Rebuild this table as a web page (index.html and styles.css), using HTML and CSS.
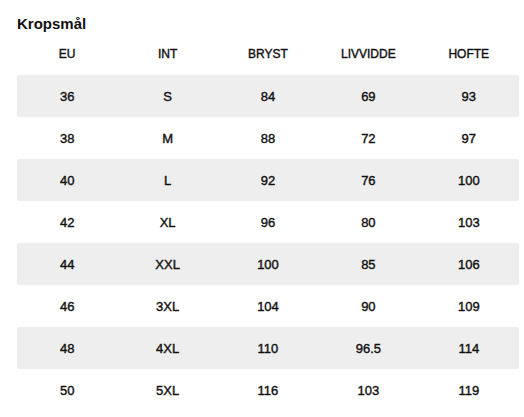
FILE: index.html
```html
<!DOCTYPE html>
<html lang="no">
<head>
<meta charset="utf-8">
<link rel="stylesheet" href="styles.css">
</head>
<body>
<div class="wrap">
  <h2 class="title">Kropsmål</h2>
  <table class="size-table">
    <thead>
      <tr><th>EU</th><th>INT</th><th>BRYST</th><th>LIVVIDDE</th><th>HOFTE</th></tr>
    </thead>
    <tbody>
      <tr><td>36</td><td>S</td><td>84</td><td>69</td><td>93</td></tr>
      <tr><td>38</td><td>M</td><td>88</td><td>72</td><td>97</td></tr>
      <tr><td>40</td><td>L</td><td>92</td><td>76</td><td>100</td></tr>
      <tr><td>42</td><td>XL</td><td>96</td><td>80</td><td>103</td></tr>
      <tr><td>44</td><td>XXL</td><td>100</td><td>85</td><td>106</td></tr>
      <tr><td>46</td><td>3XL</td><td>104</td><td>90</td><td>109</td></tr>
      <tr><td>48</td><td>4XL</td><td>110</td><td>96.5</td><td>114</td></tr>
      <tr><td>50</td><td>5XL</td><td>116</td><td>103</td><td>119</td></tr>
    </tbody>
  </table>
</div>
</body>
</html>
```
FILE: styles.css
```css
html, body {
  margin: 0;
  padding: 0;
  background: #ffffff;
}
.wrap {
  padding: 14px 5px 0 17px;
  font-family: "Liberation Sans", Arial, sans-serif;
  color: #111111;
}
.title {
  margin: 0;
  font-size: 15px;
  line-height: 19px;
  font-weight: bold;
}
.size-table {
  width: 502px;
  border-collapse: collapse;
  table-layout: fixed;
}
.size-table th,
.size-table td {
  height: 42px;
  padding: 0;
  text-align: center;
  vertical-align: middle;
  -webkit-text-stroke: 0.4px #111111;
}
.size-table th {
  font-size: 12px;
  font-weight: normal;
}
.size-table td {
  font-size: 13px;
}
.size-table tbody tr:nth-child(odd) {
  background: #eeeeee;
}
```
